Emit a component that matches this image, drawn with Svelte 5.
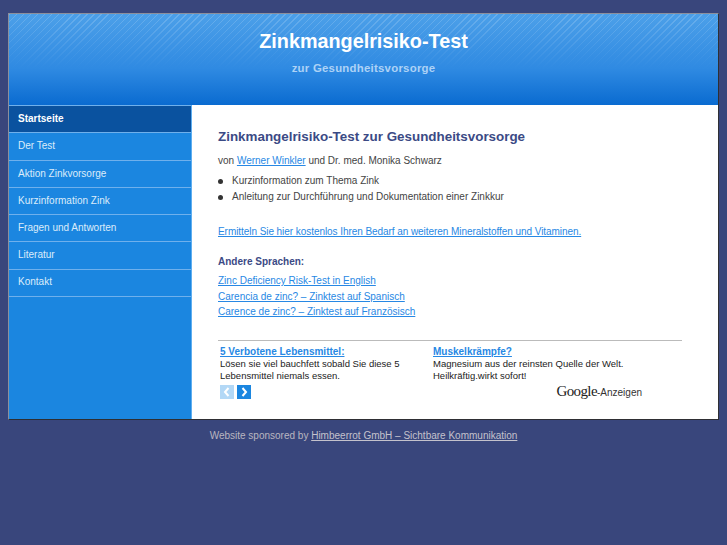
<script>
	const nav = [
		'Startseite',
		'Der Test',
		'Aktion Zinkvorsorge',
		'Kurzinformation Zink',
		'Fragen und Antworten',
		'Literatur',
		'Kontakt'
	];

	const languages = [
		'Zinc Deficiency Risk-Test in English',
		'Carencia de zinc? – Zinktest auf Spanisch',
		'Carence de zinc? – Zinktest auf Französisch'
	];
</script>

<div class="page">
	<div class="frame">
		<header>
			<h1>Zinkmangelrisiko-Test</h1>
			<h2>zur Gesundheitsvorsorge</h2>
		</header>
		<div class="columns">
			<nav>
				{#each nav as item, i}
					<a href="#top" class:active={i === 0}>{item}</a>
				{/each}
			</nav>
			<main>
				<h3>Zinkmangelrisiko-Test zur Gesundheitsvorsorge</h3>
				<p class="by">von <a href="#top">Werner Winkler</a> und Dr. med. Monika Schwarz</p>
				<ul>
					<li>Kurzinformation zum Thema Zink</li>
					<li>Anleitung zur Durchführung und Dokumentation einer Zinkkur</li>
				</ul>
				<p class="more"><a href="#top">Ermitteln Sie hier kostenlos Ihren Bedarf an weiteren Mineralstoffen und Vitaminen.</a></p>
				<h4>Andere Sprachen:</h4>
				<div class="langs">
					{#each languages as lang}
						<a href="#top">{lang}</a>
					{/each}
				</div>
				<div class="ads">
					<div class="ad">
						<a href="#top">5 Verbotene Lebensmittel:</a>
						<p>Lösen sie viel bauchfett sobald Sie diese 5 Lebensmittel niemals essen.</p>
						<div class="arrows">
							<span class="arrow off">
								<svg width="14" height="14" viewBox="0 0 14 14"><path d="M8.5 3 L5 7 L8.5 11" /></svg>
							</span>
							<span class="arrow">
								<svg width="14" height="14" viewBox="0 0 14 14"><path d="M5.5 3 L9 7 L5.5 11" /></svg>
							</span>
						</div>
					</div>
					<div class="ad">
						<a href="#top">Muskelkrämpfe?</a>
						<p>Magnesium aus der reinsten Quelle der Welt. Heilkräftig.wirkt sofort!</p>
						<div class="badge"><span class="google">Google</span><span class="suffix">-Anzeigen</span></div>
					</div>
				</div>
			</main>
		</div>
	</div>
	<footer>Website sponsored by <a href="#top">Himbeerrot GmbH – Sichtbare Kommunikation</a></footer>
</div>

<style>
	:global(body) {
		background: #39467c;
		font-family: "Liberation Sans", Arial, sans-serif;
	}

	.page {
		padding: 13px 8px 0;
	}

	.frame {
		border: 1px solid #8c8f9c;
		border-right-color: #2e2e33;
		border-bottom-color: #2e2e33;
		background: #fff;
	}

	header {
		height: 91px;
		text-align: center;
		color: #fff;
		background:
			linear-gradient(rgba(62, 150, 230, 0) 5%, #2f8ae2 60%, #0a6bd0 100%),
			repeating-linear-gradient(135deg, rgba(255, 255, 255, 0.16) 0 1px, transparent 1px 5px),
			#4a9ee8;
	}

	h1 {
		margin: 0;
		padding-top: 15px;
		font-size: 19.8px;
		line-height: 24px;
		font-weight: bold;
	}

	h2 {
		margin: 8px 0 0;
		font-size: 11.4px;
		line-height: 14px;
		font-weight: bold;
		letter-spacing: 0.25px;
		color: #add2f6;
	}

	.columns {
		display: flex;
		height: 314px;
	}

	nav {
		width: 182px;
		flex: none;
		background: #1b86e0;
		border-right: 1px solid #5eaef0;
		display: flex;
		flex-direction: column;
	}

	nav a {
		height: 26.28px;
		border-top: 1px solid #6fb0ec;
		padding-left: 9px;
		font-size: 10px;
		line-height: 25px;
		color: #dcecfa;
		text-decoration: none;
	}

	nav a:last-child {
		border-bottom: 1px solid #6fb0ec;
		line-height: 24px;
	}

	nav a.active {
		background: #0a529f;
		color: #fff;
		font-weight: bold;
	}

	main {
		flex: 1;
		padding: 0 36px 0 26px;
		font-size: 10px;
		color: #444;
	}

	main a {
		color: #2788e4;
	}

	h3 {
		margin: 23px 0 0;
		font-size: 13.4px;
		line-height: 17px;
		color: #3b4a85;
	}

	.by {
		margin: 9px 0 0;
		line-height: 14px;
	}

	ul {
		list-style: none;
		margin: 5px 0 0;
		padding: 0;
	}

	li {
		position: relative;
		padding-left: 14px;
		line-height: 16px;
	}

	li::before {
		content: "";
		position: absolute;
		left: 0;
		top: 6px;
		width: 5px;
		height: 5px;
		border-radius: 50%;
		background: #333;
	}

	.more {
		margin: 19px 0 0;
		line-height: 15px;
		letter-spacing: -0.06px;
	}

	h4 {
		margin: 16px 0 0;
		font-size: 10px;
		line-height: 14px;
		color: #3b4a85;
	}

	.langs {
		margin-top: 4px;
		display: flex;
		flex-direction: column;
		align-items: flex-start;
		line-height: 15.5px;
	}

	.ads {
		margin-top: 20px;
		border-top: 1px solid #bbb;
		display: flex;
		padding: 4px 2px 0;
	}

	.ad {
		width: 213px;
		flex: none;
		color: #222;
		font-size: 9.5px;
		line-height: 12px;
	}

	.ad > a {
		display: block;
		width: fit-content;
		font-size: 10px;
		font-weight: bold;
		line-height: 13px;
	}

	.ad p {
		margin: 0;
		width: 190px;
	}

	.ad:last-child p {
		width: 205px;
	}

	.arrows {
		display: flex;
		gap: 3px;
		margin-top: 3px;
	}

	.arrow {
		width: 14px;
		height: 14px;
		background: #1b86e0;
		display: block;
	}

	.arrow.off {
		background: #b3d8f6;
	}

	.arrow svg {
		display: block;
	}

	.arrow path {
		fill: none;
		stroke: #fff;
		stroke-width: 2;
	}

	.badge {
		display: flex;
		align-items: baseline;
		justify-content: flex-end;
		padding-right: 4px;
		margin-top: 3px;
	}

	.google {
		font-family: "Liberation Serif", serif;
		font-size: 15px;
		letter-spacing: -0.6px;
		color: #222;
	}

	.suffix {
		font-size: 10px;
		color: #333;
	}

	footer {
		margin-top: 9px;
		text-align: center;
		font-size: 10px;
		line-height: 13px;
		color: #b9b6c0;
	}

	footer a {
		color: #c4c2cc;
	}
</style>
